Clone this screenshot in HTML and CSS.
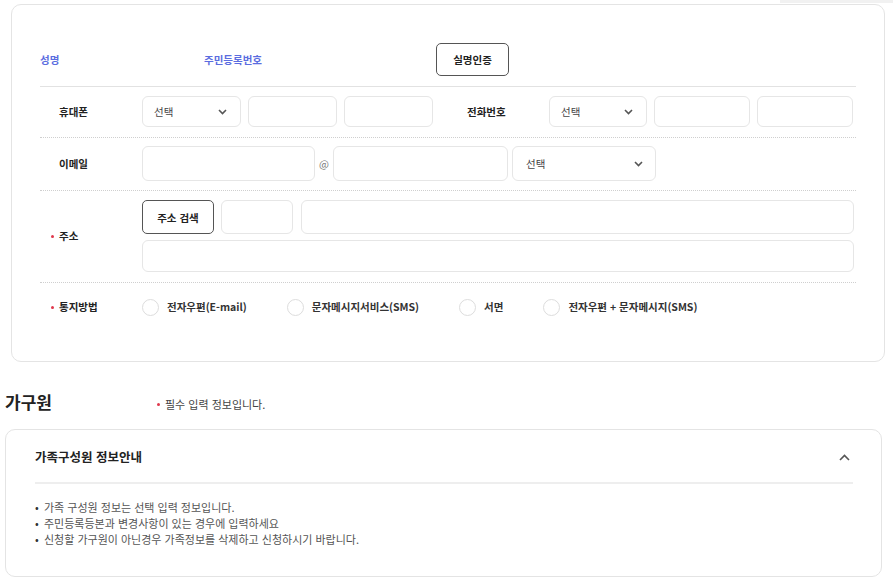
FILE: index.html
```html
<!DOCTYPE html>
<html lang="ko">
<head>
    <meta charset="UTF-8">
    <meta name="viewport" content="width=device-width, initial-scale=1.0">
    <title>신청인 정보</title>
    <link rel="stylesheet" href="styles.css">
</head>
<body>
    <div class="top-shade"></div>
    <div class="card applicant">
        <div class="name-row">
            <div class="name-label">성명</div>
            <div class="rrn-label">주민등록번호</div>
            <button class="btn-outline verify-btn">실명인증</button>
        </div>

        <div class="form-row">
            <div class="label">휴대폰</div>
            <div class="select phone-select"><span>선택</span>
                <svg width="9" height="6" viewBox="0 0 9 6"><path d="M1 1l3.5 3.5L8 1" fill="none" stroke="#555" stroke-width="1.6"/></svg>
            </div>
            <input class="field w89" type="text">
            <input class="field w89" type="text">
            <div class="label label-tel">전화번호</div>
            <div class="select tel-select"><span>선택</span>
                <svg width="9" height="6" viewBox="0 0 9 6"><path d="M1 1l3.5 3.5L8 1" fill="none" stroke="#555" stroke-width="1.6"/></svg>
            </div>
            <input class="field w96" type="text">
            <input class="field w96" type="text">
        </div>

        <div class="form-row email-row">
            <div class="label">이메일</div>
            <input class="field email-id" type="text">
            <span class="at">@</span>
            <input class="field email-domain" type="text">
            <div class="select email-select"><span>선택</span>
                <svg width="9" height="6" viewBox="0 0 9 6"><path d="M1 1l3.5 3.5L8 1" fill="none" stroke="#555" stroke-width="1.6"/></svg>
            </div>
        </div>

        <div class="form-row addr-row">
            <div class="label req">주소</div>
            <div class="addr-fields">
                <div class="addr-line">
                    <button class="btn-outline addr-btn">주소 검색</button>
                    <input class="field zip" type="text">
                    <input class="field addr1" type="text">
                </div>
                <input class="field addr2" type="text">
            </div>
        </div>

        <div class="form-row notice-row">
            <div class="label req">통지방법</div>
            <div class="radios">
                <label class="radio"><span class="circle"></span>전자우편(E-mail)</label>
                <label class="radio"><span class="circle"></span>문자메시지서비스(SMS)</label>
                <label class="radio"><span class="circle"></span>서면</label>
                <label class="radio"><span class="circle"></span>전자우편 + 문자메시지(SMS)</label>
            </div>
        </div>
    </div>

    <div class="section-head">
        <h2 class="section-title">가구원</h2>
        <div class="req-note">필수 입력 정보입니다.</div>
    </div>

    <div class="card family">
        <div class="family-head">
            <div class="family-title">가족구성원 정보안내</div>
            <svg class="toggle" width="11" height="7" viewBox="0 0 11 7"><path d="M1 6l4.5-4.5L10 6" fill="none" stroke="#555" stroke-width="1.6"/></svg>
        </div>
        <ul class="info-list">
            <li>가족 구성원 정보는 선택 입력 정보입니다.</li>
            <li>주민등록등본과 변경사항이 있는 경우에 입력하세요</li>
            <li>신청할 가구원이 아닌경우 가족정보를 삭제하고 신청하시기 바랍니다.</li>
        </ul>
    </div>
</body>
</html>
```

FILE: styles.css
```css
body {
    margin: 0;
    padding: 0 0 0 5px;
    font-family: 'Noto Sans CJK KR', 'Noto Sans', sans-serif;
    font-size: 10.5px;
    color: #222;
    background: #fff;
}
.top-shade {
    position: absolute;
    top: 0;
    right: 0;
    width: 113px;
    height: 3px;
    background: #f1f1f1;
}
.card {
    border: 1px solid #e4e4e4;
    border-radius: 10px;
    background: #fff;
}
.applicant {
    margin: 4px 0 0 6px;
    width: 874px;
    padding: 0 28px;
    box-sizing: border-box;
}
.name-row {
    display: flex;
    align-items: center;
    padding-top: 28px;
    height: 53px;
    border-bottom: 1px solid #e2e2e2;
    line-height: 14px;
}
.name-label {
    width: 164px;
    color: #5b6de0;
    font-weight: 700;
}
.rrn-label {
    width: 232px;
    color: #5b6de0;
    font-weight: 700;
}
.btn-outline {
    font-family: inherit;
    font-size: 10.5px;
    font-weight: 700;
    color: #222;
    background: #fff;
    border: 1px solid #555;
    border-radius: 5px;
    padding: 0;
    box-sizing: border-box;
}
.verify-btn {
    width: 73px;
    height: 33px;
}
.form-row {
    display: flex;
    align-items: center;
    gap: 7px;
    padding: 9px 0 10px;
    border-bottom: 1px dotted #cfcfcf;
}
.label {
    width: 102px;
    margin-right: -7px;
    padding-left: 19px;
    box-sizing: border-box;
    font-weight: 700;
    line-height: 14px;
    flex-shrink: 0;
}
.label.req {
    padding-left: 11px;
}
.label.req::before,
.req-note::before {
    content: "";
    display: inline-block;
    width: 3px;
    height: 3px;
    border-radius: 50%;
    background: #e0384c;
    vertical-align: middle;
    margin: 0 5px 2px 0;
}
.label-tel {
    margin-left: 8px;
    width: 101px;
}
.field {
    height: 31px;
    border: 1px solid #e6e6e6;
    border-radius: 6px;
    box-sizing: border-box;
    padding: 0 10px;
    font-family: inherit;
    font-size: 10.5px;
    margin: 0;
    background: #fff;
}
.w89 { width: 89px; }
.w96 { width: 96px; }
.select {
    height: 31px;
    border: 1px solid #e6e6e6;
    border-radius: 6px;
    box-sizing: border-box;
    display: flex;
    align-items: center;
    justify-content: space-between;
    padding: 0 13px 0 11px;
    color: #444;
    line-height: 14px;
}
.phone-select { width: 99px; }
.tel-select { width: 98px; }
.email-row {
    padding: 8px 0 9px;
    gap: 0;
}
.email-row .label {
    margin-right: 0;
}
.email-row .field,
.email-row .select {
    height: 35px;
}
.email-id { width: 173px; }
.at {
    width: 18px;
    text-align: center;
    color: #777;
}
.email-domain { width: 175px; }
.email-select {
    width: 144px;
    margin-left: 4px;
    padding: 0 12px 0 13px;
}
.addr-fields {
    flex: 1;
    display: flex;
    flex-direction: column;
    gap: 6px;
    margin-right: 2px;
}
.addr-line {
    display: flex;
    gap: 7px;
}
.addr-btn {
    width: 72px;
    height: 34px;
}
.addr-line .field {
    height: 34px;
}
.zip { width: 72px; }
.addr1 {
    flex: 1;
    margin-left: 1px;
}
.addr2 {
    width: 100%;
    height: 32px;
}
.notice-row {
    padding: 15px 0 45px;
    border-bottom: none;
}
.radios {
    display: flex;
    gap: 40px;
}
.radio {
    display: flex;
    align-items: center;
    gap: 8px;
    font-weight: 700;
    color: #333;
    line-height: 18px;
}
.circle {
    width: 17px;
    height: 17px;
    border: 1px solid #ddd;
    border-radius: 50%;
    box-sizing: border-box;
    background: #fff;
}
.section-head {
    display: flex;
    align-items: center;
    margin: 29px 0 16px;
}
.section-title {
    margin: 0;
    width: 152px;
    font-size: 17px;
    line-height: 22px;
    font-weight: 700;
    color: #222;
}
.req-note {
    font-size: 11px;
    color: #444;
    line-height: 14px;
    padding-top: 3px;
}
.family {
    width: 877px;
    padding: 0 28px 29px 29px;
    box-sizing: border-box;
}
.family-head {
    display: flex;
    align-items: center;
    justify-content: space-between;
    padding-top: 18px;
    height: 18px;
    padding-bottom: 16px;
    border-bottom: 2px solid #eeeeee;
}
.family-title {
    font-size: 12.5px;
    font-weight: 700;
    line-height: 18px;
    color: #222;
}
.toggle {
    margin-right: 3px;
}
.info-list {
    list-style: none;
    margin: 15px 0 0;
    padding: 0;
    font-size: 11px;
    color: #555;
    line-height: 16px;
}
.info-list li::before {
    content: "•";
    display: inline-block;
    width: 9px;
    color: #333;
}
```
